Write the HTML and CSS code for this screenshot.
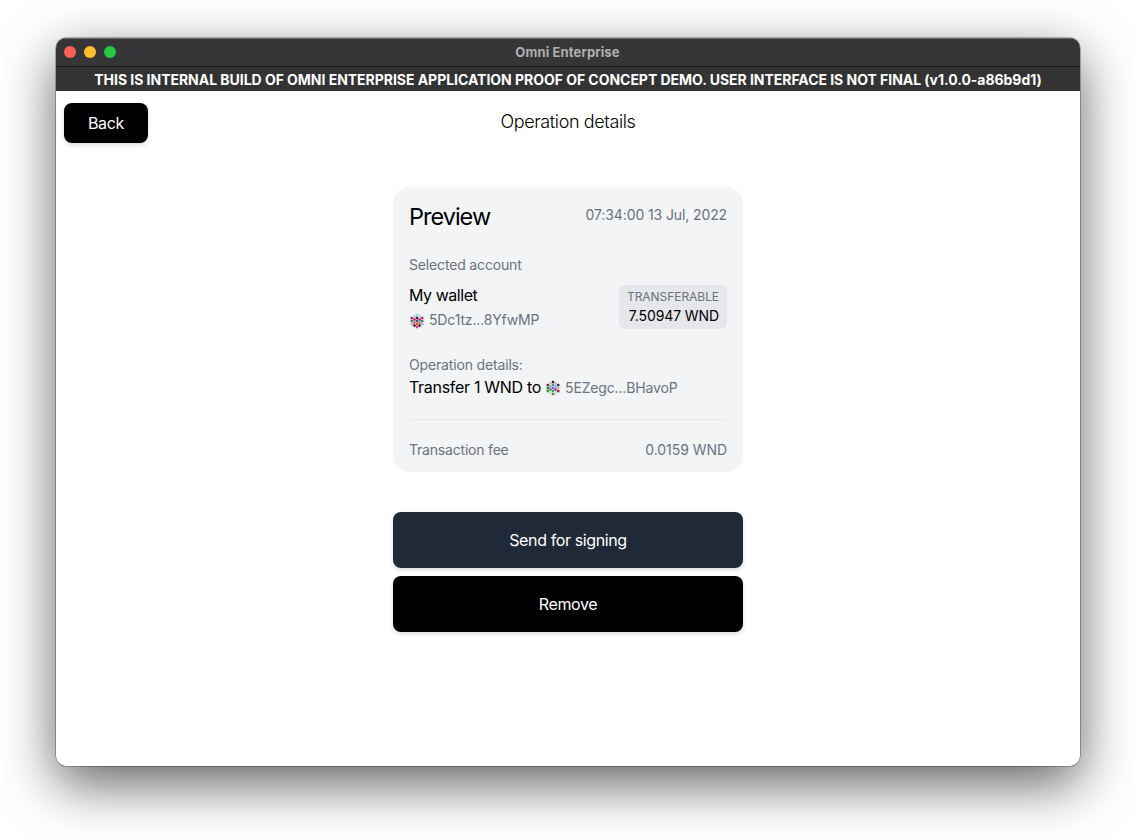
FILE: index.html
```html
<!DOCTYPE html>
<html lang="en">
<head>
<meta charset="utf-8">
<title>Omni Enterprise</title>
<link rel="stylesheet" href="styles.css">
</head>
<body>
<div class="window">
  <header class="titlebar">
    <div class="lights"><span class="light red"></span><span class="light yellow"></span><span class="light green"></span></div>
    <span class="app-name">Omni Enterprise</span>
    <div></div>
  </header>
  <div class="banner">THIS IS INTERNAL BUILD OF OMNI ENTERPRISE APPLICATION PROOF OF CONCEPT DEMO. USER INTERFACE IS NOT FINAL (v1.0.0-a86b9d1)</div>
  <main class="content">
    <div class="page-head">
      <button class="btn back">Back</button>
      <h1 class="page-title">Operation details</h1>
    </div>
    <section class="card">
      <div class="row">
        <h2 class="preview">Preview</h2>
        <span class="muted date">07:34:00 13 Jul, 2022</span>
      </div>
      <div class="muted account-label">Selected account</div>
      <div class="row account">
        <div>
          <div class="wallet">My wallet</div>
          <div class="address">
            <svg class="identicon" viewBox="0 0 64 64">
              <circle cx="32" cy="32" r="32" fill="#eeeeee"/>
              <circle cx="32" cy="8" r="5.5" fill="#8fe8b4"/><circle cx="32" cy="20" r="5.5" fill="#2b1d4f"/>
              <circle cx="21.6" cy="14" r="5.5" fill="#a9c9ff"/><circle cx="11.2" cy="20" r="5.5" fill="#c41f4d"/>
              <circle cx="21.6" cy="26" r="5.5" fill="#d3195c"/><circle cx="11.2" cy="32" r="5.5" fill="#1e8a7c"/>
              <circle cx="11.2" cy="44" r="5.5" fill="#b79af2"/><circle cx="21.6" cy="38" r="5.5" fill="#e8622c"/>
              <circle cx="21.6" cy="50" r="5.5" fill="#1e3226"/><circle cx="32" cy="56" r="5.5" fill="#f02aa8"/>
              <circle cx="32" cy="44" r="5.5" fill="#d84a24"/><circle cx="42.4" cy="50" r="5.5" fill="#1e3226"/>
              <circle cx="52.8" cy="44" r="5.5" fill="#b79af2"/><circle cx="42.4" cy="38" r="5.5" fill="#e8622c"/>
              <circle cx="52.8" cy="32" r="5.5" fill="#1e8a7c"/><circle cx="52.8" cy="20" r="5.5" fill="#c41f4d"/>
              <circle cx="42.4" cy="26" r="5.5" fill="#d3195c"/><circle cx="42.4" cy="14" r="5.5" fill="#a9c9ff"/>
              <circle cx="32" cy="32" r="5.5" fill="#176a80"/>
            </svg>
            <span class="muted">5Dc1tz...8YfwMP</span>
          </div>
        </div>
        <div class="balance">
          <div class="balance-label">TRANSFERABLE</div>
          <div class="balance-value">7.50947 WND</div>
        </div>
      </div>
      <div class="muted operation-label">Operation details:</div>
      <div class="transfer">
        <span class="transfer-text">Transfer 1 WND to</span>
        <svg class="identicon" viewBox="0 0 64 64">
          <circle cx="32" cy="32" r="32" fill="#eeeeee"/>
          <circle cx="32" cy="8" r="5.5" fill="#17205c"/><circle cx="32" cy="20" r="5.5" fill="#6e829c"/>
          <circle cx="21.6" cy="14" r="5.5" fill="#e9b79c"/><circle cx="11.2" cy="20" r="5.5" fill="#8f1c32"/>
          <circle cx="21.6" cy="26" r="5.5" fill="#3fc8e0"/><circle cx="11.2" cy="32" r="5.5" fill="#35742c"/>
          <circle cx="11.2" cy="44" r="5.5" fill="#3d8a2c"/><circle cx="21.6" cy="38" r="5.5" fill="#3a9440"/>
          <circle cx="21.6" cy="50" r="5.5" fill="#a8f0f0"/><circle cx="32" cy="56" r="5.5" fill="#8a7a20"/>
          <circle cx="32" cy="44" r="5.5" fill="#38a84c"/><circle cx="42.4" cy="50" r="5.5" fill="#a8f0f0"/>
          <circle cx="52.8" cy="44" r="5.5" fill="#a81e30"/><circle cx="42.4" cy="38" r="5.5" fill="#7c3cc0"/>
          <circle cx="52.8" cy="32" r="5.5" fill="#e6a6a0"/><circle cx="52.8" cy="20" r="5.5" fill="#252a68"/>
          <circle cx="42.4" cy="26" r="5.5" fill="#3fc8e0"/><circle cx="42.4" cy="14" r="5.5" fill="#e9b79c"/>
          <circle cx="32" cy="32" r="5.5" fill="#e82ce0"/>
        </svg>
        <span class="muted">5EZegc...BHavoP</span>
      </div>
      <div class="row fee muted"><span>Transaction fee</span><span class="fee-value">0.0159 WND</span></div>
    </section>
    <div class="actions">
      <button class="btn primary">Send for signing</button>
      <button class="btn remove">Remove</button>
    </div>
  </main>
</div>
</body>
</html>
```
FILE: styles.css
```css
* { box-sizing: border-box; margin: 0; }
body {
  height: 840px;
  padding: 38px 56px 0;
  overflow: hidden;
  background: #fff;
  color: #000;
  font-family: Inter, sans-serif;
  font-size: 16px;
}
.window {
  width: 1024px;
  height: 728px;
  border-radius: 10px;
  background: #fff;
  overflow: hidden;
  box-shadow: 0 0 0 .5px rgba(0, 0, 0, .5), 0 18px 54px rgba(0, 0, 0, .62);
}
.titlebar {
  display: grid;
  grid-template-columns: 1fr auto 1fr;
  align-items: center;
  height: 29px;
  padding: 0 9px 1px 8px;
  background: #363638;
  border-top: 1px solid #69696b;
  border-bottom: 1px solid #161617;
}
.lights { display: flex; gap: 8px; }
.light { width: 12px; height: 12px; border-radius: 50%; }
.red { background: #ff5f57; }
.yellow { background: #febc2e; }
.green { background: #28c840; }
.app-name {
  color: #b0b0b1;
  font-size: 13px;
  font-weight: 700;
  letter-spacing: .12px;
}
.banner {
  height: 24px;
  line-height: 25px;
  background: #333;
  color: #fff;
  font-size: 14px;
  font-weight: 700;
  letter-spacing: -.034px;
  text-align: center;
  white-space: nowrap;
}
.content { display: flex; flex-direction: column; align-items: center; }
.page-head {
  display: grid;
  grid-template-columns: 1fr auto 1fr;
  align-items: start;
  width: 100%;
  padding: 12px 8px 0;
}
.btn {
  border: 0;
  border-radius: 8px;
  background: #000;
  color: #fff;
  font: inherit;
  box-shadow: 0 2px 4px rgba(0, 0, 0, .15);
}
.back { width: 84px; height: 40px; letter-spacing: -.3px; }
.page-title {
  padding-top: 5px;
  line-height: 28px;
  font-size: 18px;
  font-weight: 300;
  letter-spacing: -.38px;
}
.card {
  width: 350px;
  height: 285px;
  margin-top: 43px;
  padding: 13px 16px 0;
  border-radius: 16px;
  background: #f3f4f6;
}
.page-head { min-height: 53px; }
.row { display: flex; justify-content: space-between; }
.muted { color: #6b7280; font-size: 14px; line-height: 20px; letter-spacing: -.16px; }
.preview { line-height: 33px; font-size: 23.5px; font-weight: 400; letter-spacing: -1px; }
.date { padding-top: 5px; letter-spacing: -.11px; }
.account-label { margin-top: 22px; }
.account { margin-top: 10px; }
.wallet { line-height: 24px; letter-spacing: -.46px; margin-top: -2px; }
.address { display: flex; align-items: center; gap: 4px; margin-top: 3px; }
.identicon { width: 16px; height: 16px; margin-top: 2px; }
.balance {
  width: 108px;
  height: 44px;
  padding: 4px 8px;
  border-radius: 6px;
  background: #e5e7eb;
  text-align: right;
  white-space: nowrap;
}
.balance-label { line-height: 16px; color: #6b7280; font-size: 12px; letter-spacing: -.05px; }
.balance-value { line-height: 21px; font-size: 14px; letter-spacing: -.1px; }
.operation-label { margin-top: 25px; }
.transfer { display: flex; align-items: center; gap: 4px; line-height: 24px; }
.transfer .muted { padding-top: 1px; }
.transfer-text { letter-spacing: -.3px; }
.fee { margin-top: 20px; padding-top: 20px; border-top: 1px solid #e5e7eb; letter-spacing: -.2px; }
.fee-value { letter-spacing: -.05px; }
.actions { display: flex; flex-direction: column; gap: 8px; width: 350px; margin-top: 40px; }
.actions .btn { height: 56px; letter-spacing: -.38px; }
.actions .primary { background: #1f2937; }
```
